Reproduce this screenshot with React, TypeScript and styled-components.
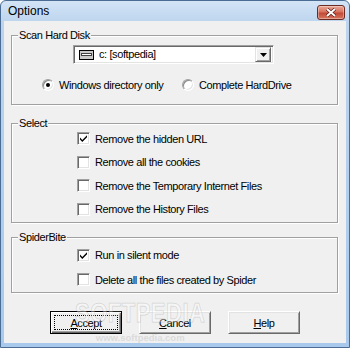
import styled, { createGlobalStyle } from 'styled-components';

const GlobalStyle = createGlobalStyle`
  html, body {
    margin: 0;
    padding: 0;
  }
  body {
    background: #ffffff;
    font-family: "Liberation Sans", Arial, sans-serif;
    font-size: 11px;
    color: #000;
  }
`;

const Window = styled.div`
  position: relative;
  box-sizing: border-box;
  width: 350px;
  height: 348px;
  display: flex;
  flex-direction: column;
  padding: 0 3px 4px;
  border: 1px solid #4b6d93;
  border-radius: 6px 6px 0 0;
  background: linear-gradient(#d3e4f6 0, #bcd4ee 22px, #a9c9ec 100%);
`;

const TitleBar = styled.div`
  height: 20px;
  display: flex;
  align-items: center;
  padding-left: 4px;
`;

const Title = styled.span`
  font-size: 12px;
  color: #000;
`;

const CloseBtn = styled.div`
  margin-left: auto;
  margin-right: 1px;
  margin-top: 3px;
  width: 28px;
  height: 15px;
  box-sizing: border-box;
  border: 1px solid #6b2a22;
  border-radius: 3px;
  background: linear-gradient(#eba897, #d8735f 45%, #c24a36 55%, #d6775f);
  box-shadow: inset 0 0 0 1px rgba(255, 255, 255, 0.35);
  display: flex;
  align-items: center;
  justify-content: center;
`;

const Client = styled.div`
  position: relative;
  flex: 1;
  display: flex;
  flex-direction: column;
  padding: 8px 8px 0 7px;
  background: #f0f0f0;
  border-top: 0;
  letter-spacing: -0.4px;
`;

const Group = styled.fieldset<{ $mt: number; $pt: number; $pb: number; $gap?: number }>`
  margin: ${p => p.$mt}px 0 0;
  padding: ${p => p.$pt}px 0 ${p => p.$pb}px;
  min-width: 0;
  display: flex;
  flex-direction: column;
  gap: ${p => p.$gap ?? 0}px;
  border: 1px solid #a0a0a0;
  box-shadow: inset 1px 1px 0 #fff, 1px 1px 0 #fff;
`;

const Legend = styled.legend`
  margin-left: 6px;
  padding: 0 1px;
  line-height: 13px;
  background: #f0f0f0;
`;

const Combo = styled.div`
  box-sizing: border-box;
  width: 201px;
  height: 19px;
  margin-left: 61px;
  display: flex;
  align-items: center;
  gap: 5px;
  padding: 2px 2px 2px 5px;
  background: #fff;
  border: 1px solid;
  border-color: #a0a0a0 #fff #fff #a0a0a0;
  box-shadow: inset 1px 1px 0 #696969, inset -1px -1px 0 #e3e3e3;
`;

const ComboText = styled.span`
  flex: 1;
  line-height: 13px;
`;

const DropButton = styled.div`
  box-sizing: border-box;
  width: 16px;
  height: 15px;
  display: flex;
  align-items: center;
  justify-content: center;
  background: #f0f0f0;
  border: 1px solid;
  border-color: #e3e3e3 #696969 #696969 #e3e3e3;
  box-shadow: inset 1px 1px 0 #fff, inset -1px -1px 0 #a0a0a0;
`;

const RadioRow = styled.div`
  margin-top: 14px;
  height: 13px;
  display: flex;
  align-items: center;
  padding-left: 30px;
`;

const RadioItem = styled.label<{ $width?: number }>`
  display: flex;
  align-items: center;
  gap: 5px;
  width: ${p => (p.$width ? `${p.$width}px` : 'auto')};
  white-space: nowrap;
`;

const RadioDot = styled.span<{ $on?: boolean }>`
  box-sizing: border-box;
  width: 12px;
  height: 12px;
  border-radius: 50%;
  background: #fff;
  border: 1px solid;
  border-color: #a0a0a0 #fff #fff #a0a0a0;
  box-shadow: inset 1px 1px 0 #8a8a8a, inset -1px -1px 0 #e3e3e3;
  display: flex;
  align-items: center;
  justify-content: center;

  &::after {
    content: '';
    width: 4px;
    height: 4px;
    border-radius: 50%;
    background: ${p => (p.$on ? '#000' : 'transparent')};
  }
`;

const CheckRow = styled.label`
  display: flex;
  align-items: center;
  gap: 5px;
  height: 13px;
  margin-left: 65px;
  white-space: nowrap;
`;

const CheckBox = styled.span`
  box-sizing: border-box;
  width: 13px;
  height: 13px;
  flex: none;
  background: #fff;
  border: 1px solid;
  border-color: #a0a0a0 #fff #fff #a0a0a0;
  box-shadow: inset 1px 1px 0 #696969, inset -1px -1px 0 #e3e3e3;
  display: flex;
  align-items: center;
  justify-content: center;
`;

const ButtonRow = styled.div`
  margin-top: 18px;
  display: flex;
  justify-content: center;
  gap: 17px;
  padding-left: 1px;
`;

const Button = styled.button<{ $default?: boolean }>`
  box-sizing: border-box;
  width: 72px;
  height: 23px;
  padding: 2px;
  display: flex;
  font-family: inherit;
  font-size: 11px;
  letter-spacing: -0.4px;
  color: #000;
  background: #f0f0f0;
  border: 1px solid;
  border-color: ${p => (p.$default ? '#000' : '#fff #696969 #696969 #fff')};
  box-shadow: ${p =>
    p.$default
      ? 'inset 1px 1px 0 #fff, inset -1px -1px 0 #696969, inset -2px -2px 0 #a0a0a0'
      : 'inset 1px 1px 0 #e3e3e3, inset -1px -1px 0 #a0a0a0'};
`;

const ButtonFace = styled.span<{ $focus?: boolean }>`
  flex: 1;
  display: flex;
  align-items: center;
  justify-content: center;
  border: 1px dotted ${p => (p.$focus ? '#000' : 'transparent')};
  margin: 1px;
`;

const Watermark = styled.div`
  position: absolute;
  left: 71px;
  top: 279px;
  pointer-events: none;
  letter-spacing: 0;
  display: flex;
  flex-direction: column;
  align-items: center;
`;

const MarkBig = styled.span`
  font-size: 22px;
  font-weight: bold;
  letter-spacing: 0.5px;
  color: rgba(255, 255, 255, 0.35);
  -webkit-text-stroke: 0.6px rgba(160, 160, 160, 0.4);
  transform: scaleY(1.25);
  line-height: 26px;
`;

const MarkSmall = styled.span`
  margin-top: 6px;
  font-size: 9.5px;
  font-weight: bold;
  color: rgba(200, 200, 200, 0.55);
`;

const DriveIcon = () => (
  <svg width="15" height="10" viewBox="0 0 15 10">
    <rect x="0.5" y="0.5" width="14" height="9" fill="#c8c8c8" stroke="#000" />
    <rect x="2.5" y="3.5" width="10" height="2" fill="#fff" stroke="#404040" />
  </svg>
);

const Check = () => (
  <svg width="9" height="9" viewBox="0 0 9 9">
    <path d="M1 3.5 L3.3 6 L8 1.3 L8 3.3 L3.3 8 L1 5.6 Z" fill="#000" />
  </svg>
);

type CheckItemProps = { label: string; checked?: boolean };

const CheckItem = ({ label, checked }: CheckItemProps) => (
  <CheckRow>
    <CheckBox>{checked && <Check />}</CheckBox>
    <span>{label}</span>
  </CheckRow>
);

const App = () => {
  return (
    <>
      <GlobalStyle />
      <Window>
        <TitleBar>
          <Title>Options</Title>
          <CloseBtn>
            <svg width="12" height="9" viewBox="0 0 12 9">
              <path d="M2 1 L10 8 M10 1 L2 8" stroke="#5a1a12" strokeWidth="3.4" />
              <path d="M2 1 L10 8 M10 1 L2 8" stroke="#fff" strokeWidth="2" />
            </svg>
          </CloseBtn>
        </TitleBar>
        <Client>
          <Group $mt={0} $pt={3} $pb={13}>
            <Legend>Scan Hard Disk</Legend>
            <Combo>
              <DriveIcon />
              <ComboText>c: [softpedia]</ComboText>
              <DropButton>
                <svg width="7" height="4" viewBox="0 0 7 4">
                  <path d="M0 0 H7 L3.5 4 Z" fill="#000" />
                </svg>
              </DropButton>
            </Combo>
            <RadioRow>
              <RadioItem $width={140}>
                <RadioDot $on />
                Windows directory only
              </RadioItem>
              <RadioItem>
                <RadioDot />
                Complete HardDrive
              </RadioItem>
            </RadioRow>
          </Group>

          <Group $mt={12} $pt={2} $pb={6} $gap={10.5}>
            <Legend>Select</Legend>
            <CheckItem label="Remove the hidden URL" checked />
            <CheckItem label="Remove all the cookies" />
            <CheckItem label="Remove the Temporary Internet Files" />
            <CheckItem label="Remove the History Files" />
          </Group>

          <Group $mt={8} $pt={5} $pb={6} $gap={11.5}>
            <Legend>SpiderBite</Legend>
            <CheckItem label="Run in silent mode" checked />
            <CheckItem label="Delete all the files created by Spider" />
          </Group>

          <ButtonRow>
            <Button $default>
              <ButtonFace $focus>
                <u>A</u>ccept
              </ButtonFace>
            </Button>
            <Button>
              <ButtonFace>
                <u>C</u>ancel
              </ButtonFace>
            </Button>
            <Button>
              <ButtonFace>
                <u>H</u>elp
              </ButtonFace>
            </Button>
          </ButtonRow>

          <Watermark>
            <MarkBig>SOFTPEDIA</MarkBig>
            <MarkSmall>www.softpedia.com</MarkSmall>
          </Watermark>
        </Client>
      </Window>
    </>
  );
};

export default App;
